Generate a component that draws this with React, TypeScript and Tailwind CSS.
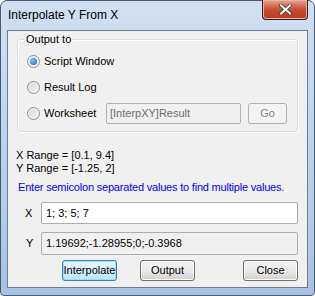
import React from 'react'

const font = { fontFamily: '"Liberation Sans", Arial, sans-serif' }

function Radio({ checked, label }: { checked?: boolean; label: string }) {
  return (
    <div className="flex items-center gap-[4px] h-[13px]">
      <span className="w-[13px] h-[13px] rounded-full border border-[#8e8f8f] bg-gradient-to-br from-[#d4d4d4] to-[#f8f8f8] flex items-center justify-center shadow-[inset_0_0_0_1px_#f4f4f4]">
        {checked && <span className="w-[7px] h-[7px] rounded-full bg-[radial-gradient(circle_at_35%_35%,#7cc9f7,#1d5fa5)]" />}
      </span>
      <span className="text-black">{label}</span>
    </div>
  )
}

function Btn({ children, focus, disabled, w }: { children: React.ReactNode; focus?: boolean; disabled?: boolean; w: string }) {
  return (
    <button
      className={`h-[21px] ${w} rounded-[3px] border flex items-center justify-center ${
        disabled
          ? 'border-[#adb2b5] bg-[#f4f4f4] text-[#838383]'
          : focus
          ? 'border-[#3c7fb1] bg-gradient-to-b from-[#eaf6fd] to-[#bee6fd] text-black shadow-[inset_0_0_0_1px_#9ddcff]'
          : 'border-[#707070] bg-gradient-to-b from-[#f2f2f2] via-[#ebebeb] to-[#cfcfcf] text-black shadow-[inset_0_0_0_1px_#fcfcfc]'
      }`}
    >
      {children}
    </button>
  )
}

export default function App() {
  return (
    <div className="w-[315px] h-[296px] text-[11px] leading-[13px]" style={font}>
      <div className="w-full h-full rounded-t-[7px] rounded-b-[4px] border border-[#4a5a6c] bg-gradient-to-b from-[#cfe0f2] via-[#bdd3ec] to-[#a7c2e2] flex flex-col px-[6px] pb-[7px]">
        {/* Title bar */}
        <div className="h-[29px] flex items-start justify-between">
          <span className="mt-[7px] ml-[1px] text-[12px] leading-[15px] text-black">Interpolate Y From X</span>
          <div className="-mt-[1px] w-[46px] h-[20px] rounded-b-[4px] border border-[#3a1b14] border-t-0 bg-gradient-to-b from-[#e8a493] via-[#c94b30] to-[#b53b22] flex items-center justify-center shadow-[inset_0_0_0_1px_#eeb2a2]">
            <svg width="13" height="11" viewBox="0 0 13 11">
              <path d="M2 1.5 L11 9.5 M11 1.5 L2 9.5" stroke="#3b3b3b" strokeWidth="3.6" strokeLinecap="square" />
              <path d="M2 1.5 L11 9.5 M11 1.5 L2 9.5" stroke="#ffffff" strokeWidth="2" strokeLinecap="square" />
            </svg>
          </div>
        </div>

        {/* Client area */}
        <div className="flex-1 border border-[#6b7c8e] bg-[#f0f0f0] flex flex-col px-[9px]">
          {/* Group box */}
          <div className="relative mt-[8px] h-[93px] border border-[#d5dfe5] rounded-[3px] shadow-[inset_1px_1px_0_#ffffff,1px_1px_0_#ffffff] pl-[9px] pr-[10px] pt-[15px]">
            <span className="absolute -top-[7px] left-[6px] px-[2px] bg-[#f0f0f0] text-black">Output to</span>
            <div className="flex flex-col gap-[13px]">
              <Radio checked label="Script Window" />
              <Radio label="Result Log" />
              <div className="flex items-center justify-between h-[13px]">
                <Radio label="Worksheet" />
                <div className="flex items-center gap-[7px]">
                  <div className="w-[135px] h-[21px] border border-[#adb2b5] rounded-[2px] bg-[#f0f0f0] text-[#6d6d6d] pl-[3px] flex items-center">
                    [InterpXY]Result
                  </div>
                  <Btn disabled w="w-[39px]">Go</Btn>
                </div>
              </div>
            </div>
          </div>

          <div className="mt-[17px] -ml-[1px] text-black">
            <div>X Range = [0.1, 9.4]</div>
            <div>Y Range = [-1.25, 2]</div>
          </div>
          <div className="mt-[6px] ml-[1px] text-[#0000ff] whitespace-nowrap tracking-[-0.2px]">Enter semicolon separated values to find multiple values.</div>

          <div className="mt-[8px] flex items-center">
            <span className="w-[24px] pl-[8px] text-black">X</span>
            <div className="w-[257px] h-[22px] border border-[#abadb3] rounded-[2px] bg-white pl-[4px] flex items-center text-black">
              1; 3; 5; 7
            </div>
          </div>
          <div className="mt-[8px] flex items-center">
            <span className="w-[24px] pl-[9px] text-black">Y</span>
            <div className="w-[257px] h-[23px] border border-[#abadb3] rounded-[2px] bg-[#f0f0f0] pl-[4px] flex items-center text-black">
              1.19692;-1.28955;0;-0.3968
            </div>
          </div>

          <div className="mt-[5px] flex items-center">
            <div className="ml-[45px]"><Btn focus w="w-[55px]">Interpolate</Btn></div>
            <div className="ml-[23px]"><Btn w="w-[55px]">Output</Btn></div>
            <div className="ml-[48px]"><Btn w="w-[55px]">Close</Btn></div>
          </div>
        </div>
      </div>
    </div>
  )
}
